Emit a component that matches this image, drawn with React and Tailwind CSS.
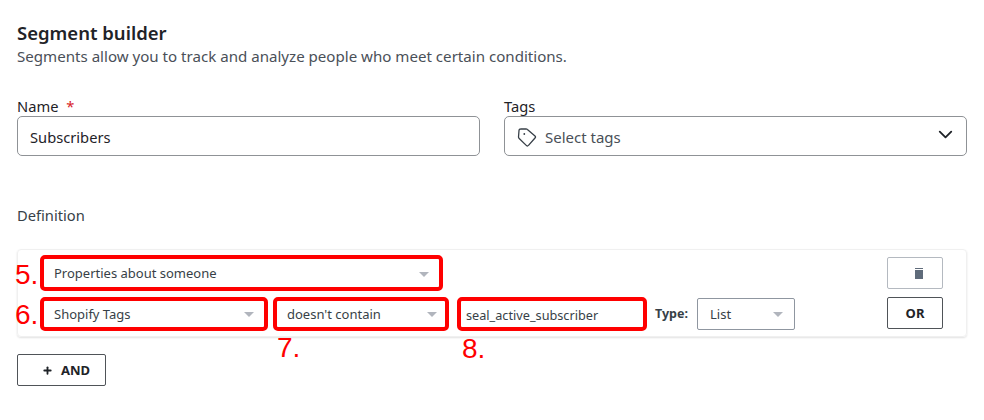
import React from "react";
import { ChevronDown, Plus } from "lucide-react";

const Caret = () => (
  <span className="ml-auto w-0 h-0 border-x-[5px] border-x-transparent border-t-[5px] border-t-[#b1b5bd]" />
);

const Annotation = ({ className, children }) => (
  <span
    className={`absolute text-[28px] leading-none text-[#ff0000] font-['Liberation_Sans',sans-serif] ${className}`}
  >
    {children}
  </span>
);

const Select = ({ className, label }) => (
  <div
    className={`flex items-center box-border rounded-[5px] border-[4px] border-[#ff0000] bg-white pl-[10px] text-[13px] text-[#373f47] ${className}`}
  >
    {label}
    <Caret />
  </div>
);

const TagIcon = () => (
  <svg width="20" height="20" viewBox="0 0 20 20" fill="none" stroke="#373f47" strokeWidth="1.3" strokeLinejoin="round">
    <path d="M2 3.5 Q2 2 3.5 2 L9 1.8 Q9.8 1.8 10.4 2.4 L18 9 Q19 10 18 11 L11.5 18.4 Q10.5 19.4 9.5 18.6 L2.2 11.5 Q1.5 10.8 1.5 10 Z" />
    <circle cx="7.3" cy="7" r="0.9" fill="#373f47" stroke="none" />
  </svg>
);

const TrashIcon = () => (
  <svg width="8" height="11" viewBox="0 0 8 11" fill="#5f6b7a">
    <rect x="0" y="0" width="8" height="1" />
    <rect x="0" y="2" width="8" height="9" />
  </svg>
);

const App = () => {
  return (
    <div className="relative w-[984px] h-[420px] bg-white px-[17px] overflow-hidden font-['Noto_Sans','Open_Sans',sans-serif] text-[#1f2328]">
      <h1 className="pt-[20px] text-[18.5px] leading-[25px] font-semibold">Segment builder</h1>
      <p className="text-[15.1px] leading-[20px] text-[#4a5058] mt-[1px]">
        Segments allow you to track and analyze people who meet certain conditions.
      </p>

      <div className="flex gap-[24px] mt-[30px]">
        <div className="w-[463px]">
          <div className="text-[14.7px] leading-[20px]">
            Name <span className="text-[#d8222a] ml-[4px]">*</span>
          </div>
          <div className="flex items-center h-[40px] rounded-[5px] border border-[#8f9296] pt-[2px] px-[12px] text-[14.7px]">
            Subscribers
          </div>
        </div>
        <div className="w-[463px]">
          <div className="text-[14.7px] leading-[20px]">Tags</div>
          <div className="flex items-center h-[40px] rounded-[5px] border border-[#8f9296] pt-[2px] pl-[12px] pr-[9px] text-[15px] text-[#4a5058]">
            <TagIcon />
            <span className="ml-[8px]">Select tags</span>
            <ChevronDown size={23} strokeWidth={1.9} className="ml-auto -mt-[5px] text-[#1f2328]" />
          </div>
        </div>
      </div>

      <div className="mt-[49px] text-[14.7px] leading-[20px] text-[#373f47]">Definition</div>

      <div className="flex mt-[24px] w-[950px] h-[88px] rounded-[4px] border border-[#f0f0f0] shadow-[0_1px_2px_rgba(0,0,0,0.12)] pl-[22px] pr-[23px] pt-[5px]">
        <div className="flex flex-col gap-[6px]">
          <Select className="w-[403px] h-[36px] pt-[2px] pr-[10px]" label="Properties about someone" />
          <div className="flex items-center">
            <Select className="w-[228px] h-[34px] pt-[1px] pr-[10px]" label="Shopify Tags" />
            <Select className="w-[176px] h-[34px] ml-[5px] pt-[1px] pr-[8px]" label="doesn't contain" />
            <div className="flex items-center box-border w-[190px] h-[34px] ml-[8px] rounded-[5px] border-[4px] border-[#ff0000] pt-[4px] pl-[5px] text-[12.7px] text-[#373f47]">
              seal_active_subscriber
            </div>
            <span className="ml-[8px] pt-[1px] text-[12.5px] font-bold text-[#373f47]">Type:</span>
            <div className="flex items-center box-border w-[98px] h-[32px] ml-[9px] rounded-[2px] border border-[#8f96a0] pt-[1px] pl-[12px] pr-[11px] text-[13px] text-[#373f47]">
              List
              <Caret />
            </div>
          </div>
        </div>
        <div className="flex flex-col gap-[8px] ml-auto pt-[2px]">
          <button className="flex items-center justify-center w-[56px] h-[32px] rounded-[2px] border border-[#b4b9c0] bg-white pl-[8px]">
            <TrashIcon />
          </button>
          <button className="w-[56px] h-[32px] rounded-[2px] border border-[#4f5358] bg-white pt-[1px] text-[13px] font-bold text-[#1f2328]">
            OR
          </button>
        </div>
      </div>

      <button className="flex items-center gap-[8px] mt-[17px] w-[89px] h-[32px] rounded-[2px] border border-[#4f5358] bg-white pt-[1px] pl-[24px] text-[13px] font-bold text-[#1f2328]">
        <Plus size={11} strokeWidth={4} />
        AND
      </button>

      <Annotation className="left-[15px] top-[261px]">5.</Annotation>
      <Annotation className="left-[15px] top-[301px]">6.</Annotation>
      <Annotation className="left-[277px] top-[334px]">7.</Annotation>
      <Annotation className="left-[462px] top-[335px]">8.</Annotation>
    </div>
  );
};

export default App;
